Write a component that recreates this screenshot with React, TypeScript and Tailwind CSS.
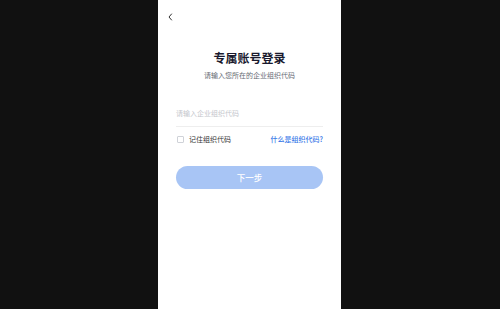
import React from "react";

export default function App() {
  return (
    <div className="w-[500px] h-[309px] bg-[#111111] flex justify-center" style={{ fontFamily: '"Noto Sans CJK SC", "Noto Sans", sans-serif' }}>
      <div className="w-[183px] h-full bg-white flex flex-col ml-[-1px]">
        <div className="h-[34px] pl-[10px] pt-[13px]">
          <svg width="5" height="8" viewBox="0 0 5 8" fill="none">
            <path d="M3.8 0.7 L1 4 L3.8 7.3" stroke="#333" strokeWidth="1" />
          </svg>
        </div>
        <div className="text-center text-[12px] leading-[16px] font-bold text-[#1a1a2e] mt-[16px]">专属账号登录</div>
        <div className="text-center text-[7px] leading-[10px] text-[#666a73] mt-[4px]">请输入您所在的企业组织代码</div>
        <div className="mx-[18px] mt-[24px] border-b border-[#eeeeee] h-[23px] flex items-start">
          <span className="text-[7px] leading-[10px] text-[#c4c6cc] mt-[4px]">请输入企业组织代码</span>
        </div>
        <div className="mx-[18px] mt-[7px] flex items-center justify-between">
          <div className="flex items-center gap-[5px]">
            <span className="w-[7px] h-[7px] border border-[#cfd2d8] rounded-[1px] ml-[1px]" />
            <span className="text-[7px] leading-[10px] text-[#333]">记住组织代码</span>
          </div>
          <span className="text-[7px] leading-[10px] text-[#3b7ae8] font-medium">什么是组织代码?</span>
        </div>
        <div className="mx-[18px] mt-[22px] h-[23px] rounded-full bg-[#a8c5f5] flex items-center justify-center">
          <span className="text-[8.5px] text-white font-medium">下一步</span>
        </div>
      </div>
    </div>
  );
}
